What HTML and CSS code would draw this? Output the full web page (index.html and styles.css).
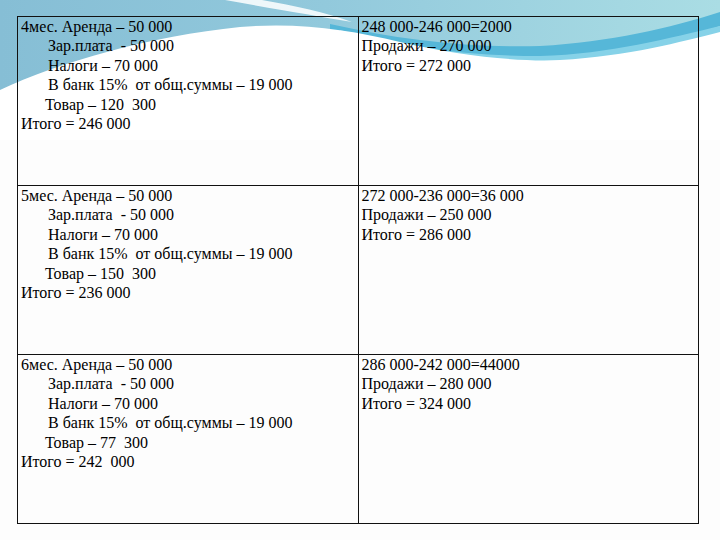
FILE: index.html
```html
<!DOCTYPE html>
<html>
<head>
<meta charset="utf-8">
<title>Расчёт</title>
<link rel="stylesheet" href="styles.css">
</head>
<body>
<svg class="wave" width="720" height="140" viewBox="0 0 720 140" aria-hidden="true">
  <defs>
    <linearGradient id="sky" x1="0" y1="0" x2="1" y2="0">
      <stop offset="0" stop-color="#86bed5"/>
      <stop offset="0.45" stop-color="#92c9dc"/>
      <stop offset="1" stop-color="#aadde4"/>
    </linearGradient>
  </defs>
  <rect x="0" y="0" width="720" height="140" fill="url(#sky)"/>
  <path d="M225,0 L262,0 C295,6 325,12 352,22 C318,16 275,9 225,0 Z" fill="#ffffff" opacity="0.85"/>
  <path d="M330,24 C400,40 470,48 540,46 C610,42 670,28 720,12 L720,26 C670,44 600,58 530,60 C460,60 395,50 330,30 Z" fill="#56b7d8"/>
  <path d="M340,30 C400,48 470,56 540,56 C610,54 670,38 720,26 L720,34 C670,48 600,62 530,64 C460,62 400,52 340,34 Z" fill="#86d2e8"/>
  <path d="M0,90 C60,62 150,36 240,27 C300,22 350,30 400,42 C460,56 520,62 560,60 C630,56 680,42 720,32 L720,140 L0,140 Z" fill="#ffffff"/>
</svg>
<table class="sheet">
  <tr>
    <td class="cell">
      <div class="ln">4мес. Аренда – 50 000</div>
      <div class="ln ind">Зар.плата  - 50 000</div>
      <div class="ln ind">Налоги – 70 000</div>
      <div class="ln ind">В банк 15%  от общ.суммы – 19 000</div>
      <div class="ln ind2">Товар – 120  300</div>
      <div class="ln">Итого = 246 000</div>
    </td>
    <td class="cell">
      <div class="ln">248 000-246 000=2000</div>
      <div class="ln">Продажи – 270 000</div>
      <div class="ln">Итого = 272 000</div>
    </td>
  </tr>
  <tr>
    <td class="cell">
      <div class="ln">5мес. Аренда – 50 000</div>
      <div class="ln ind">Зар.плата  - 50 000</div>
      <div class="ln ind">Налоги – 70 000</div>
      <div class="ln ind">В банк 15%  от общ.суммы – 19 000</div>
      <div class="ln ind2">Товар – 150  300</div>
      <div class="ln">Итого = 236 000</div>
    </td>
    <td class="cell">
      <div class="ln">272 000-236 000=36 000</div>
      <div class="ln">Продажи – 250 000</div>
      <div class="ln">Итого = 286 000</div>
    </td>
  </tr>
  <tr>
    <td class="cell">
      <div class="ln">6мес. Аренда – 50 000</div>
      <div class="ln ind">Зар.плата  - 50 000</div>
      <div class="ln ind">Налоги – 70 000</div>
      <div class="ln ind">В банк 15%  от общ.суммы – 19 000</div>
      <div class="ln ind2">Товар – 77  300</div>
      <div class="ln">Итого = 242  000</div>
    </td>
    <td class="cell">
      <div class="ln">286 000-242 000=44000</div>
      <div class="ln">Продажи – 280 000</div>
      <div class="ln">Итого = 324 000</div>
    </td>
  </tr>
</table>
</body>
</html>
```
FILE: styles.css
```css
html, body {
  margin: 0;
  padding: 0;
  background: #fdfdfd;
}
body {
  position: relative;
  width: 720px;
  height: 540px;
  overflow: hidden;
  font-family: "Liberation Serif", "Times New Roman", serif;
  color: #000;
}
.wave {
  position: absolute;
  left: 0;
  top: 0;
  z-index: 0;
}
.sheet {
  position: relative;
  z-index: 1;
  margin: 16px 0 0 17px;
  border-collapse: collapse;
  width: 682px;
  table-layout: fixed;
}
.cell {
  border: 1px solid #111;
  vertical-align: top;
  height: 169px;
  padding: 0 3px;
  width: 340px;
  box-sizing: border-box;
}
.ln {
  font-size: 16px;
  line-height: 19.4px;
  white-space: pre;
}
.ind {
  padding-left: 27px;
}
.ind2 {
  padding-left: 24px;
}
```
